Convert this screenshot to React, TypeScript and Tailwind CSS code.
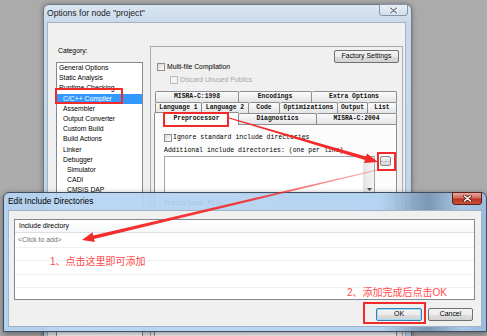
import React from "react";

function arrowPts(sx: number, sy: number, tx: number, ty: number, w0: number, w1: number, hl: number, hw: number) {
  const dx = tx - sx, dy = ty - sy;
  const L = Math.hypot(dx, dy);
  const ux = dx / L, uy = dy / L;
  const nx = -uy, ny = ux;
  const bx = tx - ux * hl, by = ty - uy * hl;
  const p = [
    [sx + nx * w0, sy + ny * w0],
    [bx + nx * w1, by + ny * w1],
    [bx + nx * hw, by + ny * hw],
    [tx, ty],
    [bx - nx * hw, by - ny * hw],
    [bx - nx * w1, by - ny * w1],
    [sx - nx * w0, sy - ny * w0],
  ];
  return p.map((q) => q.map((v) => v.toFixed(2)).join(",")).join(" ");
}

function Tab({ label, cls }: { label: string; cls: string }) {
  return (
    <div
      className={`${cls} h-full flex items-center justify-center border-t border-r border-[#8c8e94] rounded-t-[2px] bg-[linear-gradient(#fbfbfb,#e4e4e4)] font-['Liberation_Mono','Courier_New',monospace] font-bold text-[6.4px] leading-none text-[#111] whitespace-nowrap`}
    >
      {label}
    </div>
  );
}

function WinButton({ children, cls }: { children: React.ReactNode; cls: string }) {
  return (
    <div
      className={`${cls} flex items-center justify-center rounded-[2px] border bg-[linear-gradient(#f4f4f4_0%,#ececec_50%,#dedede_51%,#d2d2d2_100%)] text-[6.9px] leading-none text-black`}
    >
      {children}
    </div>
  );
}

export default function App() {
  const items: { t: string; cls: string }[] = [
    { t: "General Options", cls: "pl-[2px]" },
    { t: "Static Analysis", cls: "pl-[2px]" },
    { t: "Runtime Checking", cls: "pl-[2px]" },
    { t: "C/C++ Compiler", cls: "pl-[6px] bg-[#3399ff] text-white" },
    { t: "Assembler", cls: "pl-[6px]" },
    { t: "Output Converter", cls: "pl-[6px]" },
    { t: "Custom Build", cls: "pl-[6px]" },
    { t: "Build Actions", cls: "pl-[6px]" },
    { t: "Linker", cls: "pl-[6px]" },
    { t: "Debugger", cls: "pl-[6px]" },
    { t: "Simulator", cls: "pl-[10px]" },
    { t: "CADI", cls: "pl-[10px]" },
    { t: "CMSIS DAP", cls: "pl-[10px]" },
  ];

  return (
    <div className="relative w-[487px] h-[336px] overflow-hidden bg-[#ababab] font-['Liberation_Sans',Arial,sans-serif]">
      {/* Dialog 1: Options for node */}
      <div className="absolute left-[43px] top-[4px] w-[369px] h-[345px] rounded-t-[6px] border border-[#6c7b8c] bg-[linear-gradient(#dae6f2,#c9d9ea_18px,#c2d3e4)] shadow-[0_0_5px_rgba(0,0,0,0.35)] flex flex-col">
        <div className="h-[17px] pl-[3px] flex items-center text-[8.6px] text-[#222] whitespace-nowrap">
          Options for node "project"
        </div>
        {/* close button (inactive) */}
        <div className="absolute left-[335px] top-[-1px] w-[29px] h-[12px] rounded-b-[3px] border border-[#8596aa] bg-[linear-gradient(#e9eff5,#d3dde8)] flex items-center justify-center">
          <svg width="9" height="7" viewBox="0 0 9 7">
            <path d="M1.5 1 L7.5 6 M7.5 1 L1.5 6" stroke="#ffffff" strokeWidth="3" strokeLinecap="round" />
            <path d="M1.5 1 L7.5 6 M7.5 1 L1.5 6" stroke="#6f7d8d" strokeWidth="1.4" strokeLinecap="round" />
          </svg>
        </div>
        <div className="ml-[3px] w-[359px] flex-1 bg-[#f0f0f0] border border-[#a3b3c4] flex">
          {/* left column */}
          <div className="ml-[8px] w-[87px] pt-[23px] flex flex-col">
            <div className="h-[10px] leading-[10px] pl-[2px] text-[6.8px] text-black">Category:</div>
            <div className="mt-[6px] flex-1 border border-[#828790] bg-white flex flex-col">
              {items.map((it) => (
                <div
                  key={it.t}
                  className={`h-[10.2px] leading-[10.2px] text-[6.8px] whitespace-nowrap text-black ${it.cls}`}
                >
                  {it.t}
                </div>
              ))}
            </div>
          </div>
          {/* right panel */}
          <div className="ml-[7px] mt-[23px] w-[253px] border border-[#a9a9a9] flex flex-col">
            <div className="mt-[3px] pr-[3px] flex justify-end">
              <WinButton cls="w-[65px] h-[13px] border-[#707070]">Factory Settings</WinButton>
            </div>
            <div className="h-[8px] pl-[6px] flex items-center gap-[2px]">
              <div className="w-[8px] h-[8px] border border-[#8e8f8f] bg-[linear-gradient(135deg,#d8d8d8,#ffffff)]" />
              <span className="text-[6.8px] leading-none text-black whitespace-nowrap">Multi-file Compilation</span>
            </div>
            <div className="mt-[5px] h-[8px] pl-[19px] flex items-center gap-[2px]">
              <div className="w-[8px] h-[8px] border border-[#bcbcbc] bg-[#f4f4f4]" />
              <span className="text-[6.8px] leading-none text-[#a6a6a6] whitespace-nowrap">Discard Unused Publics</span>
            </div>
            {/* tab control */}
            <div className="mt-[7px] ml-[3px] w-[243px] flex-1 flex flex-col">
              <div className="h-[11px] flex pl-[1px]">
                <Tab label="MISRA-C:1998" cls="w-[84px] border-l" />
                <Tab label="Encodings" cls="w-[73px]" />
                <Tab label="Extra Options" cls="w-[85px]" />
              </div>
              <div className="h-[11px] flex pl-[1px]">
                <Tab label="Language 1" cls="w-[47px] border-l" />
                <Tab label="Language 2" cls="w-[47px]" />
                <Tab label="Code" cls="w-[31px]" />
                <Tab label="Optimizations" cls="w-[58px]" />
                <Tab label="Output" cls="w-[30px]" />
                <Tab label="List" cls="w-[29px]" />
              </div>
              <div className="h-[11px] flex items-end">
                <div className="relative z-10 w-[85px] h-[13px] -mb-px border-t border-l border-r border-[#8c8e94] rounded-t-[2px] bg-[#fcfcfc] flex items-center justify-center font-['Liberation_Mono','Courier_New',monospace] font-bold text-[6.4px] leading-none text-[#111]">
                  Preprocessor
                </div>
                <Tab label="Diagnostics" cls="w-[78px]" />
                <Tab label="MISRA-C:2004" cls="w-[80px]" />
              </div>
              <div className="flex-1 border border-[#8c8e94] bg-[#fcfcfc] flex flex-col font-['Liberation_Mono','Courier_New',monospace] text-[6.5px] text-black">
                <div className="mt-[9px] h-[8px] pl-[9px] flex items-center gap-[1px]">
                  <div className="w-[8px] h-[8px] border border-[#8e8f8f] bg-[linear-gradient(135deg,#d8d8d8,#ffffff)]" />
                  <span className="leading-none whitespace-nowrap">Ignore standard include directories</span>
                </div>
                <div className="mt-[5px] h-[8px] leading-[8px] pl-[9px] whitespace-nowrap">
                  Additional include directories: (one per line)
                </div>
                <div className="mt-[1px] pl-[9px] flex items-start">
                  <div className="w-[211px] h-[38px] border border-[#a0a4ab] bg-white flex justify-end">
                    <div className="w-[11px] h-full border-l border-[#e2e2e2] bg-[linear-gradient(90deg,#e6e6e6,#f3f3f3)] flex flex-col justify-end items-center pb-[2px]">
                      <svg width="5" height="3" viewBox="0 0 5 3">
                        <path d="M0 0 L5 0 L2.5 3 Z" fill="#4a4a4a" />
                      </svg>
                    </div>
                  </div>
                  <div className="ml-[5px] w-[11px] h-[10px] rounded-[2px] border border-[#8a8a8a] bg-[linear-gradient(#f4f4f4,#d6d6d6)] flex items-end justify-center pb-[1px] text-[6px] leading-none text-[#333]">
                    ...
                  </div>
                </div>
                <div className="mt-[6px] h-[8px] leading-[8px] pl-[9px] whitespace-nowrap">Preinclude file:</div>
                <div className="mt-[2px] ml-[9px] w-[211px] h-[11px] border border-[#a0a4ab] bg-white" />
              </div>
            </div>
          </div>
        </div>
      </div>

      {/* Dialog 2: Edit Include Directories */}
      <div className="absolute z-20 left-[3px] top-[192px] w-[484px] h-[140px] rounded-t-[6px] border border-[#3f4f61] bg-[linear-gradient(90deg,rgba(182,212,242,0.92)_0%,rgba(176,208,240,0.92)_78%,rgba(120,150,180,0.92)_88%,rgba(170,202,234,0.92)_95%,rgba(152,188,224,0.94)_100%)] shadow-[0_2px_6px_rgba(0,0,0,0.45)] flex flex-col">
        <div className="h-[17px] pl-[4px] flex items-center text-[8.3px] text-black whitespace-nowrap">
          Edit Include Directories
        </div>
        {/* close button (active red) */}
        <div className="absolute left-[448px] top-[-1px] w-[30px] h-[13px] rounded-b-[3px] border border-[#5b2019] bg-[linear-gradient(#e8a89d_0%,#d0685a_45%,#b83422_55%,#c8513c_100%)] flex items-center justify-center">
          <svg width="9" height="7" viewBox="0 0 9 7">
            <path d="M1.5 1 L7.5 6 M7.5 1 L1.5 6" stroke="#5b2019" strokeWidth="3" strokeLinecap="round" />
            <path d="M1.5 1 L7.5 6 M7.5 1 L1.5 6" stroke="#ffffff" strokeWidth="1.5" strokeLinecap="round" />
          </svg>
        </div>
        <div className="ml-[4px] w-[474px] h-[117px] bg-[#f0f0f0] border border-[#9fb2c6] flex flex-col">
          <div className="ml-[5px] mt-[8px] w-[461px] h-[81px] border border-[#828790] bg-white flex flex-col">
            <div className="h-[13px] border-b border-[#dcdfe4] bg-[linear-gradient(#ffffff,#f6f7f9)] pl-[4px] flex items-center text-[6.8px] text-black">
              Include directory
            </div>
            <div className="h-[15px] border-b border-[#eef0f2] pl-[3px] flex items-center text-[6.8px] text-[#707070]">
              &lt;Click to add&gt;
            </div>
            <div className="h-[13.33px] border-b border-[#eef0f2]" />
            <div className="h-[13.33px] border-b border-[#eef0f2]" />
            <div className="h-[13.33px] border-b border-[#eef0f2]" />
          </div>
          <div className="mt-[8px] pr-[8px] flex justify-end gap-[6px]">
            <WinButton cls="w-[46px] h-[13px] border-[#3c7fb1] shadow-[inset_0_0_0_1px_#9fdcf7]">OK</WinButton>
            <WinButton cls="w-[45px] h-[13px] border-[#707070]">Cancel</WinButton>
          </div>
        </div>
      </div>

      {/* Annotations */}
      <div className="absolute inset-0 z-30 pointer-events-none">
        <div className="absolute left-[55px] top-[88px] w-[68px] h-[16px] border-2 border-[#f22a2a]" />
        <div className="absolute left-[163px] top-[112px] w-[66px] h-[15px] border-2 border-[#f22a2a]" />
        <div className="absolute left-[377px] top-[152px] w-[19px] h-[19px] border-2 border-[#f22a2a]" />
        <div className="absolute left-[363px] top-[302px] w-[63px] h-[22px] border-2 border-[#f22a2a]" />
        <svg className="absolute left-0 top-0" width="487" height="336" viewBox="0 0 487 336">
          <defs>
            <linearGradient id="g2" gradientUnits="userSpaceOnUse" x1="378" y1="170" x2="82" y2="240">
              <stop offset="0" stopColor="#f42a2a" stopOpacity="0.3" />
              <stop offset="0.45" stopColor="#f42a2a" stopOpacity="0.9" />
              <stop offset="1" stopColor="#f42a2a" stopOpacity="1" />
            </linearGradient>
          </defs>
          <polygon points={arrowPts(229, 118, 378, 162, 0.4, 1.8, 13, 5)} fill="#f22a2a" />
          <polygon points={arrowPts(377, 170, 82, 240, 0.4, 1.8, 12, 5)} fill="url(#g2)" />
        </svg>
        <div className="absolute left-[50px] top-[256px] h-[12px] leading-[12px] text-[10px] text-[#ff4a4a] whitespace-nowrap font-['Liberation_Sans','Noto_Sans_CJK_SC',sans-serif]">
          1、点击这里即可添加
        </div>
        <div className="absolute left-[347px] top-[287px] h-[12px] leading-[12px] text-[10px] text-[#ff4a4a] whitespace-nowrap font-['Liberation_Sans','Noto_Sans_CJK_SC',sans-serif]">
          2、添加完成后点击OK
        </div>
      </div>
    </div>
  );
}
